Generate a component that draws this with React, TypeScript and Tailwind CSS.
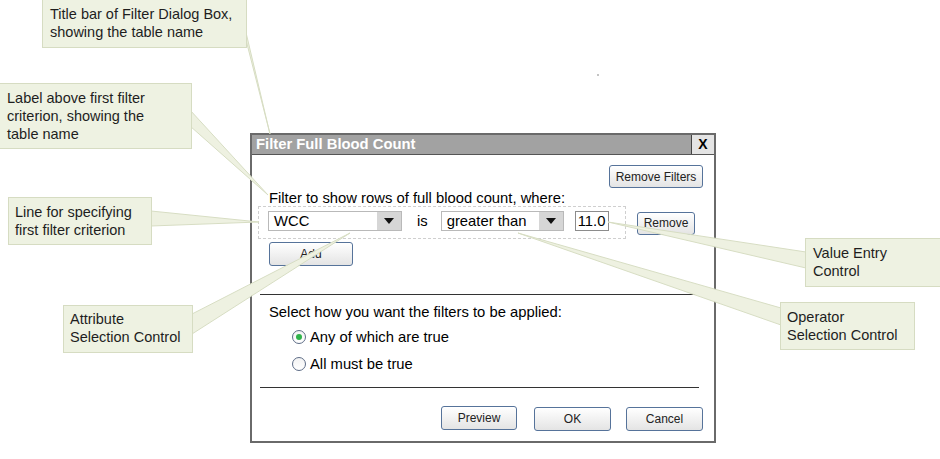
import React from "react";

type Callout = { lines: string[]; box: string };

const CALLOUTS: Callout[] = [
  { lines: ["Title bar of Filter Dialog Box,", "showing the table name"], box: "left-[42px] top-[-1px] w-[205px] h-[49px] pl-[7px] pt-[5px]" },
  { lines: ["Label above first filter", "criterion, showing the", "table name"], box: "left-[-1px] top-[83px] w-[193px] h-[66px] pl-[7px] pt-[5px]" },
  { lines: ["Line for specifying", "first filter criterion"], box: "left-[8px] top-[197px] w-[144px] h-[48px] pl-[6px] pt-[5px]" },
  { lines: ["Attribute", "Selection Control"], box: "left-[63px] top-[305px] w-[130px] h-[48px] pl-[6px] pt-[4px]" },
  { lines: ["Value Entry", "Control"], box: "left-[805px] top-[238px] w-[140px] h-[49px] pl-[7px] pt-[5px]" },
  { lines: ["Operator", "Selection Control"], box: "left-[780px] top-[302px] w-[135px] h-[48px] pl-[6px] pt-[5px]" },
];

// pointer wedges, from callout edge to the control they describe
const POINTERS = [
  "244,24 246,40 270,134",
  "190,110 190,126 268,195",
  "151,211 151,226 259,222",
  "192,314 192,334 350,233",
  "806,252 806,268 608,222",
  "781,308 781,325 518,233",
];

function Btn({ label, w, h = "h-[24px]" }: { label: string; w: string; h?: string }) {
  return (
    <button
      className={`${w} ${h} shrink-0 rounded-[3px] border border-[#56739a] bg-gradient-to-b from-white to-[#e4e4e4] text-[12px] text-[#222] shadow-[inset_0_1px_0_#fff]`}
    >
      {label}
    </button>
  );
}

function Select({ value, w }: { value: string; w: string }) {
  return (
    <div className={`${w} h-[20px] flex border border-[#b9b9b9] bg-white`}>
      <div className="flex-1 pl-[5px] text-[14.8px] leading-[18px] text-black">{value}</div>
      <div className="w-[24px] bg-[#d6d6d6] flex items-center justify-center">
        <svg width="10" height="6" viewBox="0 0 10 6">
          <path d="M0 0h10L5 6z" fill="#111" />
        </svg>
      </div>
    </div>
  );
}

function Radio({ checked, label }: { checked?: boolean; label: string }) {
  return (
    <div className="flex items-center h-[22px] pl-[40px] gap-[4px]">
      <div className="w-[14px] h-[14px] rounded-full border border-[#5d6c86] bg-gradient-to-b from-[#f3f3f3] to-white flex items-center justify-center">
        {checked && <div className="w-[6px] h-[6px] rounded-full bg-[#2fb34a]" />}
      </div>
      <span className="text-[14.8px] leading-[16px] text-black">{label}</span>
    </div>
  );
}

export default function App() {
  return (
    <div className="relative w-[940px] h-[459px] overflow-hidden bg-white font-['Liberation_Sans',Arial,sans-serif] text-[#1a1a1a]">
      {/* dialog */}
      <div className="absolute left-[250px] top-[133px] w-[466px] h-[310px] border-2 border-[#6a6a6a] bg-white flex flex-col">
        <div className="h-[20px] flex border-b border-[#555] bg-[#a2a2a2]">
          <div className="flex-1 pl-[4px] text-[14.8px] leading-[19px] font-bold text-white">Filter Full Blood Count</div>
          <div className="w-[23px] border-l border-[#444] bg-[#e4e4e4] flex items-center justify-center text-[14px] font-bold text-black">
            X
          </div>
        </div>

        <div className="flex justify-end pr-[11px] mt-[10px]">
          <Btn label="Remove Filters" w="w-[94px]" h="h-[23px]" />
        </div>

        <div className="pl-[17px] mt-[2px] text-[14.8px] leading-[16px] text-black">
          Filter to show rows of full blood count, where:
        </div>

        <div className="flex items-start">
          <div className="ml-[6px] w-[368px] h-[33px] border border-dashed border-[#cfcfcf] flex items-center pl-[9px] pb-[4px]">
            <Select value="WCC" w="w-[134px]" />
            <span className="ml-[15px] text-[14.8px] leading-[16px] text-black">is</span>
            <div className="ml-[13px]">
              <Select value="greater than" w="w-[123px]" />
            </div>
            <div className="ml-[11px] w-[34px] h-[20px] border border-[#8c8c8c] pl-[2px] text-[14.8px] leading-[18px] text-black">
              11.0
            </div>
          </div>
          <div className="ml-[11px] mt-[4px]">
            <Btn label="Remove" w="w-[58px]" h="h-[23px]" />
          </div>
        </div>

        <div className="pl-[17px] mt-[2px]">
          <Btn label="Add" w="w-[84px]" />
        </div>

        <div className="mt-[28px] ml-[8px] mr-[14px] h-[1px] bg-[#333]" />

        <div className="pl-[17px] mt-[9px] text-[14.8px] leading-[16px] text-black">
          Select how you want the filters to be applied:
        </div>
        <div className="mt-[6px] flex flex-col gap-[5px]">
          <Radio checked label="Any of which are true" />
          <Radio label="All must be true" />
        </div>

        <div className="mt-[12px] ml-[8px] mr-[15px] h-[1px] bg-[#333]" />

        <div className="mt-[18px] flex justify-end pr-[11px]">
          <Btn label="Preview" w="w-[76px]" />
          <div className="ml-[17px]">
            <Btn label="OK" w="w-[77px]" />
          </div>
          <div className="ml-[15px]">
            <Btn label="Cancel" w="w-[77px]" />
          </div>
        </div>
      </div>

      {/* stray mark */}
      <div className="absolute left-[597px] top-[74px] w-[2px] h-[2px] bg-[#c4c4c4]" />

      {/* pointers over the dialog */}
      <svg className="absolute left-0 top-0" width="940" height="459" viewBox="0 0 940 459">
        {POINTERS.map((p) => (
          <polygon key={p} points={p} fill="#eef1e1" stroke="#d7ddc3" strokeWidth="1" strokeLinejoin="round" />
        ))}
      </svg>

      {CALLOUTS.map((c) => (
        <div
          key={c.lines[0]}
          className={`absolute ${c.box} border border-[#d6dcc2] bg-[#eef2e2] text-[14.5px] leading-[18px] text-[#1e1e1e]`}
        >
          {c.lines.map((l) => (
            <div key={l}>{l}</div>
          ))}
        </div>
      ))}
    </div>
  );
}
